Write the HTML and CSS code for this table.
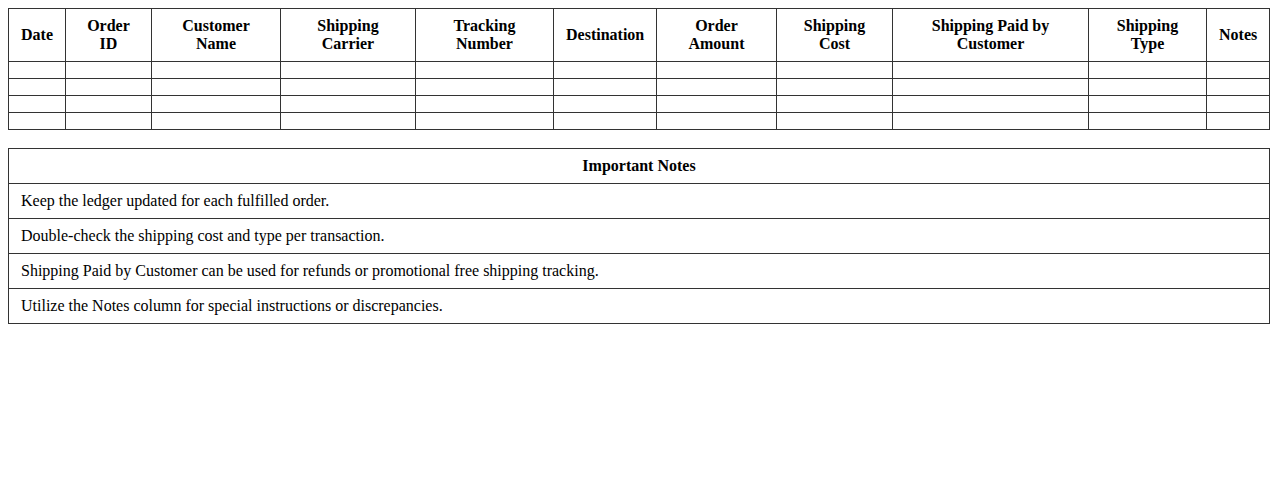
FILE: index.html
```html
<!DOCTYPE html>
<html lang="en">
<head>
<meta charset="utf-8">
<title>Shipping Ledger</title>
<link rel="stylesheet" href="styles.css">
</head>
<body>
<table class="ledger">
  <colgroup>
    <col class="col-date">
    <col class="col-order">
    <col class="col-customer">
    <col class="col-carrier">
    <col class="col-tracking">
    <col class="col-dest">
    <col class="col-amount">
    <col class="col-cost">
    <col class="col-paid">
    <col class="col-type">
    <col class="col-notes">
  </colgroup>
  <thead>
    <tr>
      <th>Date</th>
      <th>Order ID</th>
      <th>Customer Name</th>
      <th>Shipping Carrier</th>
      <th>Tracking Number</th>
      <th>Destination</th>
      <th>Order Amount</th>
      <th>Shipping Cost</th>
      <th>Shipping Paid by Customer</th>
      <th>Shipping Type</th>
      <th>Notes</th>
    </tr>
  </thead>
  <tbody>
    <tr><td></td><td></td><td></td><td></td><td></td><td></td><td></td><td></td><td></td><td></td><td></td></tr>
    <tr><td></td><td></td><td></td><td></td><td></td><td></td><td></td><td></td><td></td><td></td><td></td></tr>
    <tr><td></td><td></td><td></td><td></td><td></td><td></td><td></td><td></td><td></td><td></td><td></td></tr>
    <tr><td></td><td></td><td></td><td></td><td></td><td></td><td></td><td></td><td></td><td></td><td></td></tr>
  </tbody>
</table>

<table class="notes">
  <thead>
    <tr><th>Important Notes</th></tr>
  </thead>
  <tbody>
    <tr><td>Keep the ledger updated for each fulfilled order.</td></tr>
    <tr><td>Double-check the shipping cost and type per transaction.</td></tr>
    <tr><td>Shipping Paid by Customer can be used for refunds or promotional free shipping tracking.</td></tr>
    <tr><td>Utilize the Notes column for special instructions or discrepancies.</td></tr>
  </tbody>
</table>
</body>
</html>
```

FILE: styles.css
```css
body {
  margin: 8px;
  font-family: "Liberation Serif", "Times New Roman", serif;
  font-size: 16px;
  color: #000;
  background: #fff;
}

table {
  width: 100%;
  border-collapse: collapse;
}

.ledger {
  table-layout: fixed;
}

.col-date { width: 57px; }
.col-order { width: 86px; }
.col-customer { width: 129px; }
.col-carrier { width: 135px; }
.col-tracking { width: 138px; }
.col-dest { width: 103px; }
.col-amount { width: 120px; }
.col-cost { width: 116px; }
.col-paid { width: 196px; }
.col-type { width: 118px; }

th, td {
  border: 1px solid #333;
  padding: 8px 12px;
  line-height: 18px;
}

th {
  font-weight: bold;
  text-align: center;
}

.notes {
  margin-top: 18px;
}

.notes td {
  text-align: left;
}
```
